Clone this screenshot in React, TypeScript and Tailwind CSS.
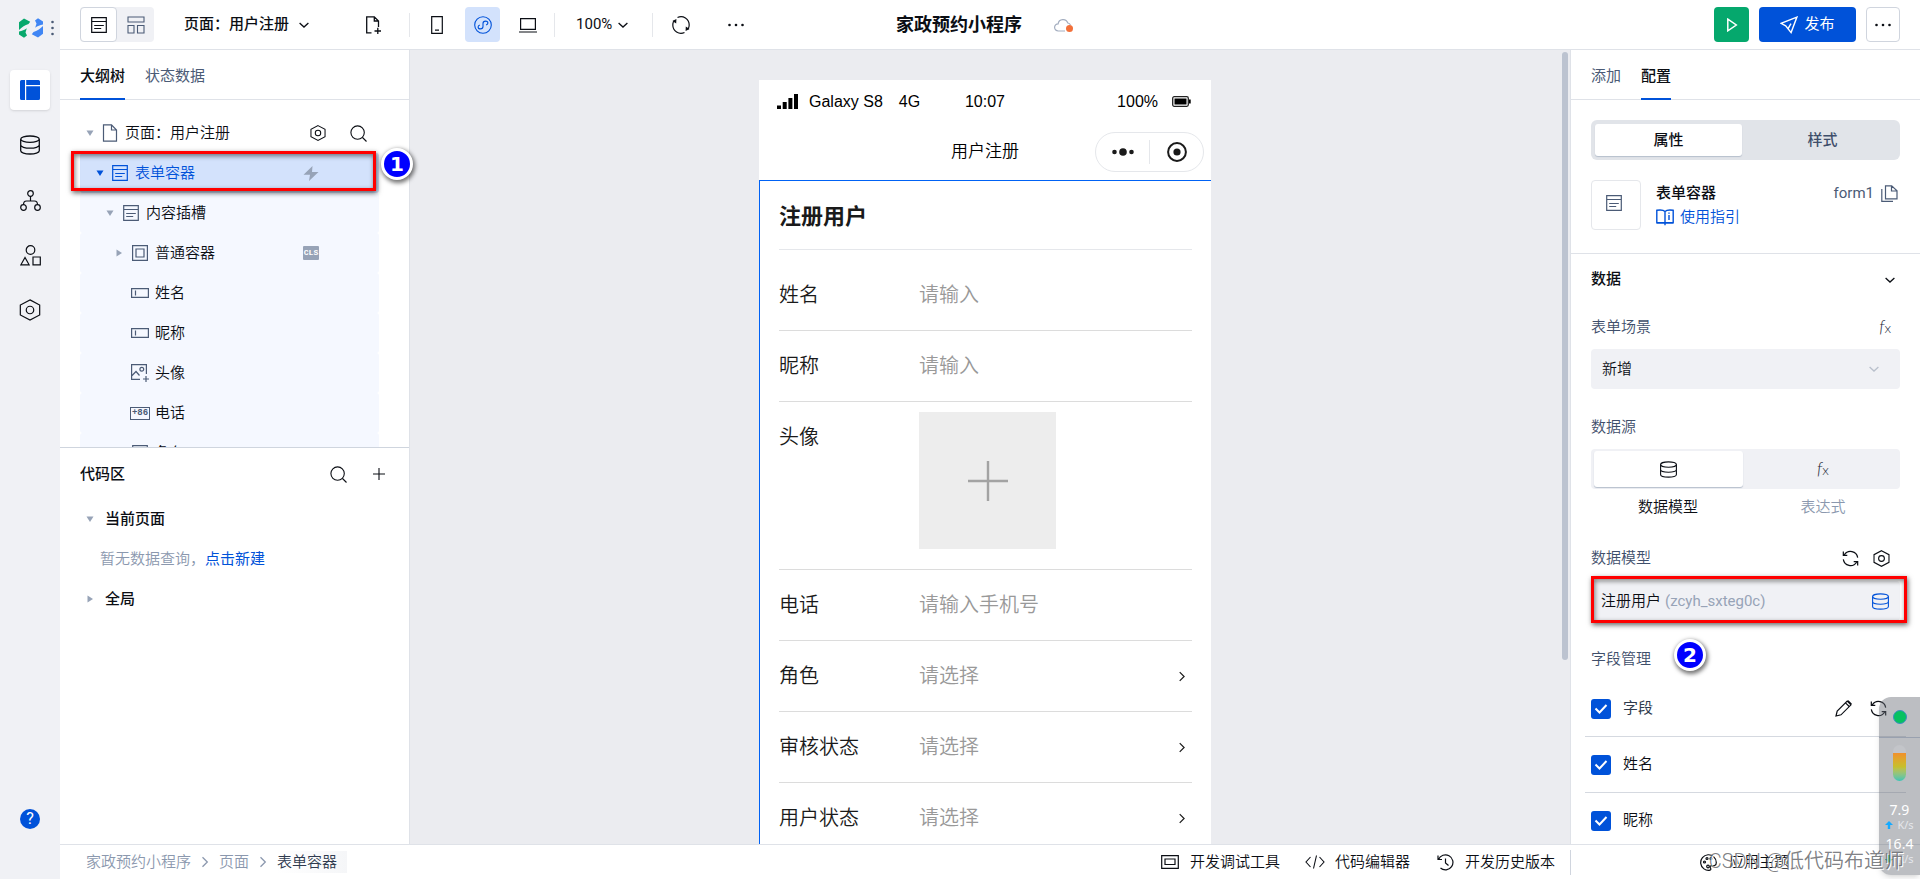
import React from 'react';

type IconProps = { className?: string; children?: React.ReactNode; box?: string; sw?: number };

const Svg = ({ className = 'size-5', children, box = '0 0 20 20', sw = 1.2 }: IconProps) => (
  <svg className={`shrink-0 ${className}`} viewBox={box} fill="none" stroke="currentColor" strokeWidth={sw} aria-hidden="true">
    {children}
  </svg>
);

const FormIcon = ({ className = 'size-4' }: IconProps) => (
  <Svg className={className} box="0 0 16 16" sw={1.2}>
    <path d="M.7.7h14.6v14.6H.7zM.7 4.500h14.6M3.200 8.500h9.600M3.200 11.500h7" />
  </Svg>
);
const LayoutIcon = () => (
  <Svg className="size-[18px]" box="0 0 18 18" sw={1.1}>
    <path d="M1 1h16v5H1zM1 9.500h6v7.500H1zM10.500 9.500H17v7.500h-6.500z" />
  </Svg>
);
const ChevronDown = ({ className = 'size-[10px]' }: IconProps) => (
  <Svg className={className} box="0 0 10 10" sw={1.3}><path d="M.6 3l4.400 4L9.400 3" /></Svg>
);
const ChevronRight = ({ className = 'h-3 w-2' }: IconProps) => (
  <Svg className={className} box="0 0 8 12" sw={1.3}><path d="M1.500 1.200L6.300 6l-4.800 4.800" /></Svg>
);
const Database = ({ className = 'size-5' }: IconProps) => (
  <Svg className={className} sw={1.3}>
    <ellipse cx="10" cy="4.200" rx="9.300" ry="3.200" />
    <path d="M.7 4.200v11.600c0 1.800 4.200 3.200 9.300 3.200s9.300-1.400 9.300-3.200V4.200M.7 10c0 1.800 4.200 3.200 9.300 3.200s9.300-1.400 9.300-3.200" />
  </Svg>
);
const Hex = ({ className = 'size-4', sw = 1.3 }: IconProps) => (
  <Svg className={className} sw={sw}><path d="M10 .8l8.800 4.700v9L10 19.200 1.200 14.500v-9z" /><circle cx="10" cy="10" r="3.400" /></Svg>
);
const SearchIcon = () => (
  <Svg className="size-[17px]" box="0 0 17 17" sw={1.1}><circle cx="7.600" cy="7.600" r="6.700" /><path d="M12.500 12.500l4 4" /></Svg>
);
const Sync = ({ className = 'size-[18px]' }: IconProps) => (
  <Svg className={className} box="0 0 18 18" sw={1.3}>
    <path d="M16.600 8A7.700 7.700 0 0 0 2.500 5M1.400 10a7.700 7.700 0 0 0 14.100 3M1.400 1.500v4.200h4.200M16.600 16.500v-4.200h-4.200" />
  </Svg>
);
const Rotate = () => (
  <Svg className="size-[18px]" box="0 0 18 18" sw={1.2}>
    <path d="M5.500 1.500A8.200 8.200 0 0 1 17.200 9a8 8 0 0 1-1.200 4.300M12.500 16.500A8.200 8.200 0 0 1 .8 9 8 8 0 0 1 2 4.700" />
    <path d="M.4 5l4-2-.2 4.400zM17.600 13l-4 2 .2-4.400z" fill="currentColor" stroke="none" />
  </Svg>
);
const Dots = () => (
  <Svg className="h-1 w-4" box="0 0 16 4" sw={0}>
    <g fill="currentColor"><circle cx="1.500" cy="2" r="1.300" /><circle cx="8" cy="2" r="1.300" /><circle cx="14.500" cy="2" r="1.300" /></g>
  </Svg>
);
const Fx = () => (
  <span className="inline-flex items-baseline text-gray-800" aria-hidden="true">
    <span className="font-['Lato'] text-[17px] leading-5 font-light italic">f</span>
    <span className="font-['Lato'] text-sm leading-5 font-light">x</span>
  </span>
);
const InputIcon = () => (
  <Svg className="h-[10px] w-[18px]" box="0 0 18 10"><path d="M.6.6h16.800v8.800H.6zM4.500 2.500v5" /></Svg>
);
const BoxIcon = () => (
  <Svg className="size-4" box="0 0 16 16"><path d="M.6.6h14.800v14.800H.6zM4 4h8v8H4z" /></Svg>
);
const ImageIcon = () => (
  <Svg className="size-[18px]" box="0 0 18 18">
    <path d="M9 15.400H.6V.6h14.800V10M.6 12l4.400-4.500 3.500 4M12 15h6M15 12v6" /><circle cx="10.800" cy="5.300" r="1.900" />
  </Svg>
);
const PhoneCode = () => (
  <span className="flex h-[13px] w-5 items-center justify-center border border-[#4b5b76] font-['Liberation_Mono'] text-[9px] leading-none font-bold text-[#4b5b76]">+86</span>
);
const Caret = ({ open, className = 'text-[#97a3b7]' }: { open?: boolean; className?: string }) => (
  <svg className={`size-2 shrink-0 ${className}`} viewBox="0 0 8 8" fill="currentColor" aria-hidden="true">
    <path d={open ? 'M.5 1.500h7L4 7z' : 'M1.500.5v7L7 4z'} />
  </svg>
);

const Badge = ({ n, className }: { n: string; className: string }) => (
  <span className={`absolute z-10 flex size-8 items-center justify-center rounded-full border-[3px] border-white bg-[#0000ff] font-['DejaVu_Sans'] text-xl font-bold text-white shadow-[1px_2px_4px_1px_rgba(0,0,0,0.55)] ${className}`}>{n}</span>
);
const Frame = ({ className }: { className: string }) => (
  <span className={`pointer-events-none absolute z-10 border-[3px] border-[#ff0000] shadow-[1px_2px_5px_rgba(0,0,0,0.6),inset_1px_2px_5px_rgba(0,0,0,0.5)] ${className}`} />
);

function Rail() {
  const tile = 'flex size-10 items-center justify-center rounded';
  return (
    <nav className="flex w-[60px] shrink-0 flex-col items-center bg-[#f0f1f5] pb-[50px]">
      <div className="flex h-[55px] w-full items-center gap-2 pl-[19px]">
        <svg className="h-5 w-6 shrink-0" viewBox="0 0 24 20" aria-hidden="true">
          <g fill="#07a86c"><path d="M0 4.200L5 .5l6.200 3.200L9.500 6C6 7 3 9 0 12z" /><path d="M0 13.500C3 13 5.500 12 7.800 10.300L6.500 14.500 8 17.500 5 19.800 0 16.500z" /></g>
          <g fill="#4086f4"><path d="M24 15.800l-5 3.700-6.200-3.200 1.700-2.300c3.500-1 6.500-3 9.500-6z" /><path d="M24 6.500c-3 .5-5.500 1.500-7.800 3.200l1.300-4.200-1.500-3 3-2.300 5 3.300z" /></g>
        </svg>
        <svg className="h-4 w-[3px]" viewBox="0 0 3 16" fill="#4b5b76" aria-hidden="true"><circle cx="1.500" cy="2" r="1.300" /><circle cx="1.500" cy="8" r="1.300" /><circle cx="1.500" cy="14" r="1.300" /></svg>
      </div>
      <div className="flex flex-col gap-[15px] pt-[15px]">
        <button aria-label="页面" className={`${tile} bg-white text-[#0052d9] shadow-sm`}>
          <svg className="size-5" viewBox="0 0 20 20" fill="currentColor" aria-hidden="true"><path d="M1.500 0H5v20H1.500A1.500 1.500 0 0 1 0 18.500v-17A1.500 1.500 0 0 1 1.500 0zM6.200 0h12.300A1.500 1.500 0 0 1 20 1.500V5H6.200zM6.200 6.200H20v12.300a1.500 1.500 0 0 1-1.500 1.500H6.200z" /></svg>
        </button>
        <button aria-label="数据" className={tile}><Database /></button>
        <button aria-label="流程" className={tile}>
          <Svg className="size-[21px]" box="0 0 21 21" sw={1.2}><circle cx="10.500" cy="3.500" r="2.800" /><circle cx="3.500" cy="17.500" r="2.800" /><circle cx="17.500" cy="17.500" r="2.800" /><path d="M10.500 6.300v4.700M3.500 14.700c0-2.600 1-3.700 3-3.700h8c2 0 3 1.100 3 3.700" /></Svg>
        </button>
        <button aria-label="组件" className={tile}>
          <Svg className="size-[21px]" box="0 0 21 21" sw={1.2}><circle cx="10.500" cy="5" r="4.300" /><path d="M5 12.500L.9 19.800h8.200zM13 12h7.300v7.800H13z" /></Svg>
        </button>
        <button aria-label="设置" className={tile}><Hex className="size-[22px]" sw={1.1} /></button>
      </div>
      <button aria-label="帮助" className="mt-auto flex size-5 items-center justify-center rounded-full bg-[#0052d9] text-base font-normal text-white">?</button>
    </nav>
  );
}

function Header() {
  const sep = 'h-6 w-px bg-gray-200';
  return (
    <header className="relative flex h-[50px] shrink-0 items-center border-b border-[#dfe2e8] bg-white pr-5 pl-5">
      <div className="flex h-[35px] rounded bg-[#f0f1f5]">
        <button aria-label="大纲" className="flex w-[37px] items-center justify-center rounded border border-[#d0d5de] bg-white"><FormIcon /></button>
        <button aria-label="布局" className="flex w-[37px] items-center justify-center text-[#4b5b76]"><LayoutIcon /></button>
      </div>
      <button className="ml-[30px] flex items-center gap-[10px] font-medium">页面：用户注册<ChevronDown /></button>
      <button aria-label="新建页面" className="ml-14">
        <Svg className="size-[18px]" box="0 0 18 18" sw={1.3}><path d="M6.500 16.800H1.700V.8h7.600L13.500 5v6M9.300.8V5h4.200M9.500 15h6.500M12.800 11.800v6.200" /></Svg>
      </button>
      <span className={`${sep} ml-[26px]`} />
      <button aria-label="手机" className="ml-[21px]"><Svg className="h-[18px] w-3" box="0 0 12 18"><path d="M.7.7h10.600v16.600H.7zM4 14.200h4" /></Svg></button>
      <button aria-label="小程序" className="ml-[22px] flex size-[35px] items-center justify-center rounded bg-[#d3e2fc] text-[#0052d9]">
        <Svg className="size-[18px]" box="0 0 18 18" sw={1.1}><circle cx="9" cy="9" r="8.300" /><path d="M5.900 8.900c-1.200.4-1.800 1-1.800 2 0 1.200 1 2 2.300 2S9 12 9 10.600V7.400C9 6 10.200 5.100 11.600 5.100s2.300.8 2.300 2c0 1-.6 1.600-1.800 2" /></Svg>
      </button>
      <button aria-label="电脑" className="ml-[19px]"><Svg className="h-4 w-[18px]" box="0 0 18 16"><path d="M1.600 1.600h14.800v10.800H1.600zM0 15h18" /></Svg></button>
      <span className={`${sep} ml-[17px]`} />
      <button className="ml-[21px] flex items-center gap-[6px] font-normal">100%<ChevronDown /></button>
      <span className={`${sep} ml-6`} />
      <button aria-label="刷新" className="ml-[19px]"><Rotate /></button>
      <button aria-label="更多" className="ml-[38px] flex"><Dots /></button>
      <div className="absolute left-1/2 flex -translate-x-[94px] items-center gap-8">
        <h1 className="text-lg font-bold whitespace-nowrap">家政预约小程序</h1>
        <span className="relative flex text-[#a3adbf]">
          <Svg className="h-4 w-[18px]" box="0 0 18 16"><path d="M11 14H4.300a3.600 3.600 0 0 1-.2-7.200A5 5 0 0 1 13.800 6a4 4 0 0 1 2.700 2" /></Svg>
          <i className="absolute -right-px bottom-px size-[7px] rounded-full bg-[#f2703a]" />
        </span>
      </div>
      <div className="ml-auto flex h-[35px] gap-[10px]">
        <button aria-label="预览" className="flex w-[35px] items-center justify-center rounded bg-[#05a86d] text-white"><Svg className="h-[14px] w-3" box="0 0 12 14" sw={1.5}><path d="M1.800 1.200l8.500 5.800-8.500 5.800z" /></Svg></button>
        <button className="flex w-[97px] items-center justify-center gap-[6px] rounded bg-[#0052d9] font-normal text-white">
          <Svg className="size-[18px]" box="0 0 18 18" sw={1.4}><path d="M16.900 1.100L1 7.300l4.700 2.600 5.400 6.700zM5.700 9.900L8 12.700l3-5" /></Svg>发布
        </button>
        <button aria-label="更多操作" className="flex w-[34px] items-center justify-center rounded border border-[#d0d5de]"><Dots /></button>
      </div>
    </header>
  );
}

const Tab = ({ active, children }: { active?: boolean; children: string }) => (
  <button className={`-mb-px flex items-center border-b-2 pt-1 ${active ? 'border-[#0052d9] font-medium' : 'border-transparent font-normal text-[#4b5b76]'}`}>{children}</button>
);

function TreeRow({ pad, caret, icon, label, extra }: { pad: string; caret?: React.ReactNode; icon: React.ReactNode; label: string; extra?: React.ReactNode }) {
  return (
    <li className={`flex h-10 items-center rounded-[3px] bg-[#f5f8ff] pr-[60px] ${pad}`}>
      <span className="flex w-[15px] shrink-0">{caret}</span>
      <span className="flex w-5 shrink-0 justify-center text-[#4b5b76]">{icon}</span>
      <span className="ml-[5px]">{label}</span>
      {extra}
    </li>
  );
}

function LeftPanel() {
  return (
    <aside className="relative flex w-[350px] shrink-0 flex-col border-r border-[#dfe2e8] bg-white">
      <div className="flex h-[50px] shrink-0 gap-5 border-b border-[#dfe2e8] px-5"><Tab active>大纲树</Tab><Tab>状态数据</Tab></div>
      <div className="h-[348px] shrink-0 overflow-hidden border-b border-[#cfd5de] pt-[13px] pr-[30px] pl-5">
        <ul>
          <li className="flex h-10 items-center pl-[6px]">
            <Caret open />
            <Svg className="ml-2 h-[18px] w-4 text-[#4b5b76]" box="0 0 16 18"><path d="M1.500.8h8L14.500 6v11.200h-13zM9.500.8V6h5" /></Svg>
            <span className="ml-[7px]">页面：用户注册</span>
            <button aria-label="页面设置" className="mr-6 ml-auto"><Hex /></button>
            <button aria-label="搜索" className="mr-3"><SearchIcon /></button>
          </li>
          <li className="flex h-10 items-center rounded-[3px] bg-[#d3e2fc] pr-[60px] pl-4 text-[#0052d9]">
            <Caret open className="text-[#0052d9]" /><FormIcon className="ml-2 size-4" /><span className="ml-[7px]">表单容器</span>
            <svg className="ml-auto h-[15px] w-4 text-[#97a3b7]" viewBox="0 0 16 15" fill="currentColor" aria-hidden="true"><path d="M9.500 0L.5 8.800H7L6 15l9.500-9H9z" /></svg>
          </li>
          <TreeRow pad="pl-[26px]" caret={<Caret open />} icon={<FormIcon />} label="内容插槽" />
          <TreeRow pad="pl-[35px]" caret={<Caret />} icon={<BoxIcon />} label="普通容器" extra={<span className="ml-auto flex h-[14px] w-4 items-center justify-center rounded-[1px] bg-[#97a3b7] font-['Liberation_Mono'] text-[8px] leading-none font-bold text-white">CLS</span>} />
          <TreeRow pad="pl-[35px]" icon={<InputIcon />} label="姓名" />
          <TreeRow pad="pl-[35px]" icon={<InputIcon />} label="昵称" />
          <TreeRow pad="pl-[35px]" icon={<ImageIcon />} label="头像" />
          <TreeRow pad="pl-[35px]" icon={<PhoneCode />} label="电话" />
          <TreeRow pad="pl-[35px]" icon={<FormIcon />} label="角色" />
        </ul>
      </div>
      <section className="px-5 pt-px">
        <div className="flex h-[50px] items-center">
          <h2 className="font-medium">代码区</h2>
          <button aria-label="搜索代码" className="mr-[26px] ml-auto"><SearchIcon /></button>
          <button aria-label="新建" className="mr-1"><Svg className="size-3" box="0 0 12 12" sw={1.1}><path d="M6 0v12M0 6h12" /></Svg></button>
        </div>
        <div className="flex h-10 items-center gap-[11px] pl-[6px] font-medium"><Caret open />当前页面</div>
        <p className="flex h-10 items-center pl-5 text-[#8b98ae]">暂无数据查询，<a href="#new" className="font-normal text-[#0052d9]">点击新建</a></p>
        <div className="flex h-10 items-center gap-[11px] pl-[6px] font-medium"><Caret />全局</div>
      </section>
      <Frame className="top-[101px] left-[11px] h-10 w-[305px]" />
      <Badge n="1" className="top-[98px] left-[321px]" />
    </aside>
  );
}

function PhoneRow({ id, label, hint, select }: { id: string; label: string; hint: string; select?: boolean }) {
  return (
    <div className="flex h-[71px] items-center border-b border-[#dcdcdc]">
      <label htmlFor={id} className="w-[140px] shrink-0">{label}</label>
      {select ? (
        <div className="flex min-w-0 flex-1 items-center pr-[6px]">
          <select id={id} className="min-w-0 flex-1 appearance-none bg-transparent text-[#999] outline-none"><option>{hint}</option></select>
          <ChevronRight className="h-[11px] w-2" />
        </div>
      ) : (
        <input id={id} placeholder={hint} className="min-w-0 flex-1 bg-transparent outline-none placeholder:text-[#999]" />
      )}
    </div>
  );
}

function Canvas() {
  return (
    <main className="relative flex min-w-0 flex-1 justify-center overflow-hidden bg-[#ebecf0] pt-[30px] pr-[10px]">
      <div className="w-[452px] shrink-0 bg-white">
        <div className="relative flex h-[43px] items-center pr-5 pl-[18px] font-['Liberation_Sans'] text-base font-normal text-black">
          <svg className="h-4 w-[22px]" viewBox="0 0 22 16" aria-hidden="true"><path d="M0 11.500h4V15H0zM5.700 8h4v7h-4zM11.400 4h4v11h-4zM17 0h4v15h-4z" /></svg>
          <span className="ml-[10px]">Galaxy S8</span><span className="ml-4">4G</span>
          <span className="absolute inset-x-0 text-center">10:07</span>
          <span className="mr-[14px] ml-auto">100%</span>
          <svg className="h-[11px] w-[19px]" viewBox="0 0 19 11" aria-hidden="true"><rect x=".7" y=".7" width="15.600" height="9.600" rx="1.500" fill="none" stroke="#222" strokeWidth="1.300" /><path d="M2.500 2.500h12v6h-12zM17 3.500h1.700v4H17z" /></svg>
        </div>
        <div className="relative flex h-[57px] items-center justify-center text-[17px] text-black">
          用户注册
          <div className="absolute right-[7px] flex h-10 w-[109px] items-center rounded-full border border-gray-200 text-[#1a1a1a]">
            <button aria-label="菜单" className="flex flex-1 justify-center"><svg className="h-2 w-[22px]" viewBox="0 0 22 8" fill="currentColor" aria-hidden="true"><circle cx="2.500" cy="4" r="2.300" /><circle cx="11" cy="4" r="3.800" /><circle cx="19.500" cy="4" r="2.300" /></svg></button>
            <span className="h-6 w-px bg-gray-200" />
            <button aria-label="关闭" className="flex flex-1 justify-center"><svg className="size-5" viewBox="0 0 20 20" fill="currentColor" aria-hidden="true"><circle cx="10" cy="10" r="8.900" fill="none" stroke="currentColor" strokeWidth="2" /><circle cx="10" cy="10" r="3.600" /></svg></button>
          </div>
        </div>
        <form className="border-t border-l border-[#0062f5] pr-[19px] pl-[19px] text-xl text-[#1a1a1a]">
          <h2 className="mb-[10px] flex h-[69px] items-center border-b border-gray-200 pt-1 text-[22px] font-bold">注册用户</h2>
          <PhoneRow id="name" label="姓名" hint="请输入" />
          <PhoneRow id="nick" label="昵称" hint="请输入" />
          <div className="flex h-[168px] items-start border-b border-[#dcdcdc] pt-[10px]">
            <span className="w-[140px] shrink-0 pt-[11px]">头像</span>
            <button type="button" aria-label="上传头像" className="flex size-[137px] items-center justify-center bg-[#ededed] text-[#a3a3a3]"><Svg className="size-10" box="0 0 40 40" sw={2.400}><path d="M20 0v40M0 20h40" /></Svg></button>
          </div>
          <PhoneRow id="tel" label="电话" hint="请输入手机号" />
          <PhoneRow id="role" label="角色" hint="请选择" select />
          <PhoneRow id="audit" label="审核状态" hint="请选择" select />
          <PhoneRow id="state" label="用户状态" hint="请选择" select />
        </form>
      </div>
      <span className="absolute top-[2px] right-[2px] h-[608px] w-[6px] rounded-full bg-[#bcc3d0]" />
    </main>
  );
}

const Check = ({ id, label, medium, children }: { id: string; label: string; medium?: boolean; children?: React.ReactNode }) => (
  <div className="-mx-[6px] flex h-14 items-center border-b border-[#d5d9e0] pr-[14px] pl-[6px]">
    <span className="relative flex">
      <input id={id} type="checkbox" defaultChecked className="size-5 appearance-none rounded-[3px] bg-[#0052d9]" />
      <svg className="pointer-events-none absolute top-1 left-[3px] h-3 w-[14px]" viewBox="0 0 14 12" fill="none" stroke="#fff" strokeWidth="2" aria-hidden="true"><path d="M1.500 5.500l4 4 7-7.500" /></svg>
    </span>
    <label htmlFor={id} className={`ml-3 ${medium ? 'font-normal text-[#2f3a4e]' : ''}`}>{label}</label>
    {children}
  </div>
);

function RightPanel() {
  const label = 'text-[#3f4f6b]';
  return (
    <aside className="relative flex w-[350px] shrink-0 flex-col border-l border-[#dfe2e8] bg-white">
      <div className="flex h-[50px] shrink-0 gap-5 border-b border-[#dfe2e8] px-5"><Tab>添加</Tab><Tab active>配置</Tab></div>
      <div className="min-h-0 flex-1 overflow-hidden">
        <div className="flex flex-col gap-5 border-b border-[#dfe2e8] px-5 pt-5 pb-[23px]">
          <div className="flex h-10 rounded-md bg-[#e1e4e9] p-1 font-medium">
            <button className="w-[147px] rounded-[3px] bg-white shadow-[0_1px_1px_#b6bfcc]">属性</button>
            <button className="flex-1 pl-[7px] text-[#3f4f6b]">样式</button>
          </div>
          <div className="flex h-[50px]">
            <span className="flex size-[50px] items-center justify-center rounded border border-gray-200 pr-1 pb-1 text-[#4b5b76]"><FormIcon /></span>
            <div className="ml-[15px] flex flex-1 flex-col justify-center">
              <div className="flex h-6 items-center">
                <h2 className="font-medium">表单容器</h2>
                <span className="ml-auto font-normal text-[#4b5b76]">form1</span>
                <button aria-label="复制" className="mr-[2px] ml-[7px] text-[#4b5b76]"><Svg className="size-[17px]" box="0 0 17 17"><path d="M4.500.8h6.200l5.300 5v8H4.500zM10.500.8v5.200H16M.8 4v12.400H12" /></Svg></button>
              </div>
              <a href="#guide" className="flex h-6 items-center gap-[6px] text-[#0052d9]"><Svg className="h-[17px] w-[18px]" box="0 0 18 17" sw={1.4}><path d="M9 2.500C7.500 1 4 .8.8 1.300v12.300h16.400V1.300C14 .8 10.500 1 9 2.500zM9 2.500v11M.5 14h17M9 13.600v2.600M13 6v5M13 3.500v1.300" /></Svg>使用指引</a>
            </div>
          </div>
        </div>
        <div className="px-5">
          <div className="flex h-[51px] items-center justify-between pr-[5px]"><h2 className="font-medium">数据</h2><button aria-label="收起"><ChevronDown /></button></div>
          <div className="flex h-11 items-center justify-between pr-[9px]"><label htmlFor="scene" className={label}>表单场景</label><button aria-label="表单场景表达式" className="flex"><Fx /></button></div>
          <div className="relative flex items-center">
            <select id="scene" className="h-10 w-full appearance-none rounded bg-[#f0f1f5] px-[11px] outline-none"><option>新增</option></select>
            <ChevronDown className="pointer-events-none absolute right-[21px] size-[10px] text-[#b9c0cc]" />
          </div>
          <div className={`flex h-[60px] items-end pb-[11px] ${label}`}>数据源</div>
          <div className="flex h-10 rounded bg-[#f0f1f5] px-[3px] py-[2px]">
            <button aria-label="数据模型" className="flex w-[149px] items-center justify-center rounded-[3px] bg-white shadow-[0_1px_1px_#b6bfcc]"><Database className="size-[17px]" /></button>
            <button aria-label="表达式" className="flex flex-1 items-center justify-center pl-[6px]"><Fx /></button>
          </div>
          <div className="flex h-9 items-center text-center"><span className="w-[155px] pr-px">数据模型</span><span className="flex-1 text-[#8b98ae]">表达式</span></div>
          <div className="mt-[11px] flex h-[45px] items-center pr-[1px]">
            <label htmlFor="model" className={label}>数据模型</label>
            <button aria-label="刷新模型" className="mr-[14px] ml-auto"><Sync className="size-[17px]" /></button>
            <button aria-label="模型设置" className="mr-[9px]"><Hex className="size-[17px]" /></button>
          </div>
          <div className="relative">
            <button id="model" className="flex h-10 w-full items-center rounded bg-[#f0f1f5] pr-[11px] pl-[10px]">注册用户<span className="ml-1 font-normal text-[#97a3b7]">(zcyh_sxteg0c)</span><span className="ml-auto text-[#0052d9]"><Database className="size-[17px]" /></span></button>
            <Frame className="-top-[5px] -right-[7px] -bottom-[2px] left-0" />
            <Badge n="2" className="top-[58px] left-[83px]" />
          </div>
          <div className={`flex h-[60px] items-end pb-[11px] ${label}`}>字段管理</div>
          <Check id="all" label="字段" medium>
            <button aria-label="编辑" className="ml-auto"><Svg className="size-[17px]" box="0 0 17 17" sw={1.200}><path d="M1 16l1.200-5L12.200 1 16 4.800l-10 10zM10.500 2.800l3.700 3.700M13 .7l3.500 3.500" /></Svg></button>
            <button aria-label="刷新字段" className="mr-[5px] ml-[18px]"><Sync className="size-[17px]" /></button>
          </Check>
          <Check id="f1" label="姓名" />
          <Check id="f2" label="昵称" />
        </div>
      </div>
    </aside>
  );
}

function Footer() {
  return (
    <footer className="flex h-[35px] shrink-0 items-center border-t border-[#dfe2e8] bg-white pl-[26px] whitespace-nowrap">
      <nav className="flex items-center gap-[10px] text-[#8b98ae]">
        <a href="#app">家政预约小程序</a><ChevronRight /><a href="#page">页面</a><ChevronRight />
        <span className="bg-gradient-to-r from-white to-[#f5f6f8] pr-[10px] text-[#2f3a4e]">表单容器</span>
      </nav>
      <div className="ml-auto flex items-center pr-[15px]">
        <button className="flex items-center gap-[11px]"><Svg className="h-[14px] w-[18px]" box="0 0 18 14" sw={1.2}><path d="M.7.7h16.600v12.600H.7zM4 4h10v5.500H4z" /></Svg>开发调试工具</button>
        <button className="ml-[25px] flex items-center gap-[10px]"><Svg className="h-[14px] w-5" box="0 0 20 14" sw={1.1}><path d="M5.500 2L1 7l4.500 5M14.500 2L19 7l-4.500 5M11.500.5l-3 13" /></Svg>代码编辑器</button>
        <button className="ml-[27px] flex items-center gap-[11px]"><Svg className="size-[17px]" box="0 0 17 17" sw={1.2}><path d="M1 1.500v4h4M1.500 5.500A7.500 7.500 0 1 1 3.500 14M8.500 4.500V9l3 2.500" /></Svg>开发历史版本</button>
      </div>
      <div className="flex h-[25px] w-[350px] shrink-0 items-center border-l border-[#d0d5de] pl-[129px]">
        <button className="flex items-center gap-3"><Svg className="size-[17px]" box="0 0 17 17"><path d="M10 16.200A7.800 7.800 0 1 1 16.300 8.500c0 3-2 3.500-4 3.200-2-.3-2.600 1-1.800 2.300.5 1 .5 2-.5 2.200z" /><circle cx="4.500" cy="8" r="1" /><circle cx="7" cy="4.500" r="1" /><circle cx="11" cy="4.500" r="1" /><circle cx="8" cy="12.500" r="1.300" /></Svg>应用主题</button>
      </div>
    </footer>
  );
}

function NetMonitor() {
  return (
    <div className="absolute right-0 bottom-1 flex h-[178px] w-[41px] flex-col items-center rounded-l-xl bg-[#6b6f78]/45 pt-[13px] font-['Noto_Sans'] font-normal text-white shadow-md">
      <i className="size-[14px] shrink-0 rounded-full border border-[#3d8fc0] bg-[#07c160]" />
      <i className="mt-[13px] h-px w-full shrink-0 bg-gray-400" />
      <span className="mt-[7px] h-9 w-[13px] shrink-0 overflow-hidden rounded-full bg-[#c3c5c9] pt-2"><i className="block h-full bg-gradient-to-b from-[#f0902c] via-[#c5c02c] to-[#35c4b5]" /></span>
      <span className="mt-5 text-sm leading-[18px]">7.9</span>
      <span className="flex items-center gap-1 text-[11px] leading-3 text-gray-200"><svg className="size-2" viewBox="0 0 8 8" fill="#14aaff" aria-hidden="true"><path d="M4 0l4 4H5.200v4H2.800V4H0z" /></svg>K/s</span>
      <span className="mt-1 text-sm leading-[18px]">16.4</span>
      <span className="flex items-center gap-1 text-[11px] leading-3 text-gray-200"><svg className="size-2" viewBox="0 0 8 8" fill="#0a9c58" aria-hidden="true"><path d="M4 8l4-4H5.200V0H2.800v4H0z" /></svg>K/s</span>
    </div>
  );
}

export default function App() {
  return (
    <div className="relative flex h-screen overflow-hidden bg-white font-['Roboto','Noto_Sans_CJK_SC',sans-serif] text-[15px] font-[350] text-[#0b0e14]">
      <Rail />
      <div className="flex min-w-0 flex-1 flex-col">
        <Header />
        <div className="flex min-h-0 flex-1"><LeftPanel /><Canvas /><RightPanel /></div>
        <Footer />
      </div>
      <NetMonitor />
      <span className="pointer-events-none absolute right-4 bottom-1 text-xl font-[350] text-[#6f7175]/90 [text-shadow:1px_1px_0_#fff]">CSDN @低代码布道师</span>
    </div>
  );
}
